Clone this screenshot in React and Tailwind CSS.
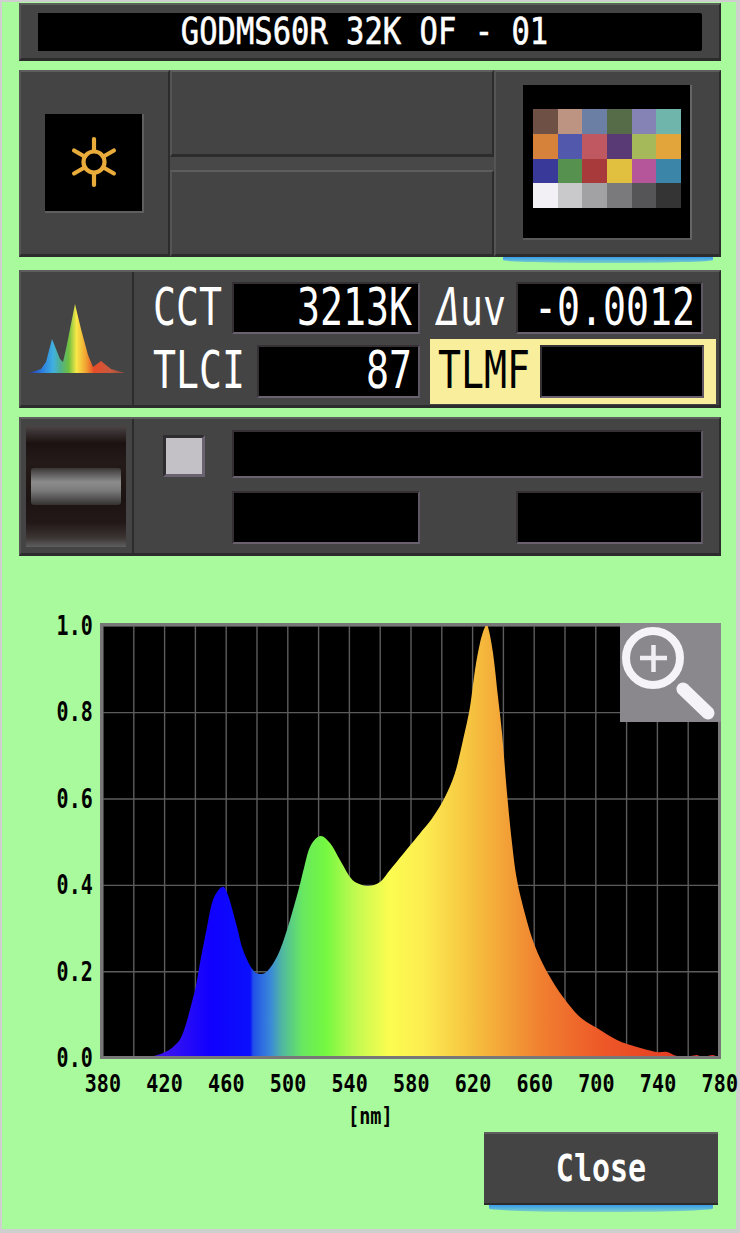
import React from "react";

const pts = [[140,1058],[150,1057],[163,1053],[173,1047],[183,1033],[195,990],[200,963],[207,927],[213,900],[222,887],[228,895],[237,927],[243,950],[253,970],[262,974],[270,968],[280,950],[290,920],[299,888],[304,868],[310,847],[320,836],[330,843],[340,860],[350,877],[357,883],[368,886],[380,882],[390,870],[417,837],[433,817],[445,797],[455,773],[463,740],[470,707],[475,670],[480,643],[485,627],[488,627],[493,653],[498,697],[502,733],[507,793],[512,843],[517,880],[525,914],[532,938],[540,958],[550,977],[563,997],[580,1017],[597,1028],[617,1040],[637,1047],[657,1052],[667,1052],[677,1056],[690,1056],[697,1055],[703,1057],[713,1055],[718,1058]];

function smooth(p) {
  let d = `M${p[0][0]} 1058 L${p[0][0]} ${p[0][1]}`;
  for (let i = 0; i < p.length - 1; i++) {
    const a = p[Math.max(i - 1, 0)], b = p[i], c = p[i + 1], e = p[Math.min(i + 2, p.length - 1)];
    d += ` C${b[0] + (c[0] - a[0]) / 6} ${b[1] + (c[1] - a[1]) / 6} ${c[0] - (e[0] - b[0]) / 6} ${c[1] - (e[1] - b[1]) / 6} ${c[0]} ${c[1]}`;
  }
  return d + ` L${p[p.length - 1][0]} 1058 Z`;
}

const chartColors = ["#6e5144","#bd9482","#6a7fa3","#566b48","#8582b5","#6fb5ab","#d6823a","#5258ab","#bf5860","#5a3a75","#a5b85a","#e2a53c","#39399a","#56914f","#a83a3c","#e2c03f","#b5569a","#3a85a8","#f2f0f4","#c9c9cb","#a2a2a4","#7a7a7c","#555557","#343434"];

const xLabels = ["380","420","460","500","540","580","620","660","700","740","780"];
const yLabels = ["1.0","0.8","0.6","0.4","0.2","0.0"];

const panel = "bg-[#444444] border-t-2 border-l-2 border-b-[3px] border-r-2 border-t-[#5e5e5e] border-l-[#555555] border-b-[#2c2c2c] border-r-[#2c2c2c]";
const well = "bg-black border-t-2 border-l-2 border-b-2 border-r-2 border-t-[#343034] border-l-[#343034] border-b-[#6b6270] border-r-[#5f5864] flex items-center justify-end";

function Big({ children, cls = "" }) {
  return <span className={"inline-block scale-y-[1.33] text-[38.2px] leading-none whitespace-pre " + cls}>{children}</span>;
}

function Sun() {
  const rays = [0, 60, 120, 180, 240, 300];
  return (
    <svg width="60" height="60" viewBox="-30 -30 60 60">
      <circle r="10.5" fill="none" stroke="#e9ac3b" strokeWidth="4.2" />
      {rays.map((a) => (
        <line key={a} x1="0" y1="-11" x2="0" y2="-23" stroke="#e9ac3b" strokeWidth="4.2" strokeLinecap="round" transform={`rotate(${a})`} />
      ))}
    </svg>
  );
}

function MiniSpectrum() {
  return (
    <svg width="100" height="74" viewBox="29 305 100 74">
      <defs>
        <linearGradient id="mini" gradientUnits="userSpaceOnUse" x1="30" y1="0" x2="127" y2="0">
          <stop offset="0" stopColor="#2a2f9a" />
          <stop offset="0.14" stopColor="#2a7ce0" />
          <stop offset="0.26" stopColor="#40b0e0" />
          <stop offset="0.34" stopColor="#50b088" />
          <stop offset="0.42" stopColor="#70c040" />
          <stop offset="0.5" stopColor="#f8e848" />
          <stop offset="0.6" stopColor="#f0a030" />
          <stop offset="0.68" stopColor="#e84c28" />
          <stop offset="0.85" stopColor="#c85a40" />
          <stop offset="1" stopColor="#8a4a3a" />
        </linearGradient>
      </defs>
      <path d="M31 376 L43 372 L48 365 L54 342 L62 362 L65 365 L68 352 L77 307 L83 332 L90 358 L95 370 L103 364 L113 372 L127 376 Z" fill="url(#mini)" />
    </svg>
  );
}

function Spectrum() {
  const vs = Array.from({ length: 21 }, (_, i) => 103 + i * 30.8);
  const hs = [626, 712.6, 799, 885.4, 971.8, 1058];
  return (
    <svg width="621" height="436" viewBox="100 623 621 436" className="block">
      <defs>
        <linearGradient id="spec" gradientUnits="userSpaceOnUse" x1="140" y1="0" x2="720" y2="0">
          <stop offset="0" stopColor="#4a14e0" />
          <stop offset="0.06" stopColor="#3210f4" />
          <stop offset="0.12" stopColor="#1000ff" />
          <stop offset="0.19" stopColor="#0a10fc" />
          <stop offset="0.195" stopColor="#2050e8" />
          <stop offset="0.225" stopColor="#3a88d8" />
          <stop offset="0.245" stopColor="#50b8a0" />
          <stop offset="0.28" stopColor="#68e860" />
          <stop offset="0.32" stopColor="#74f840" />
          <stop offset="0.37" stopColor="#c0fa50" />
          <stop offset="0.43" stopColor="#fcfc50" />
          <stop offset="0.49" stopColor="#fcec50" />
          <stop offset="0.59" stopColor="#f5b83c" />
          <stop offset="0.69" stopColor="#f08030" />
          <stop offset="0.79" stopColor="#ee5a28" />
          <stop offset="1" stopColor="#e02c20" />
        </linearGradient>
      </defs>
      <rect x="100" y="623" width="621" height="436" fill="#000" />
      {vs.map((x) => <line key={x} x1={x} y1="624" x2={x} y2="1058" stroke="#5c5c5c" strokeWidth="1.4" />)}
      {hs.map((y) => <line key={y} x1="101" y1={y} x2="720" y2={y} stroke="#5c5c5c" strokeWidth="1.4" />)}
      <path d={smooth(pts)} fill="url(#spec)" />
      <rect x="101.5" y="624.5" width="618" height="433" fill="none" stroke="#777777" strokeWidth="3" />
    </svg>
  );
}

export default function App() {
  return (
    <div className="w-[740px] h-[1233px] overflow-hidden bg-[#cfcfcf] pt-[2px] pl-[2px] font-['DejaVu_Sans_Mono',monospace]">
      <div className="w-[734px] h-[1227px] bg-[#a8fa9c] pl-[17px] pt-[1px]">
        {/* title */}
        <div className={panel + " w-[702px] h-[58px] pt-[8px] pl-[17px]"}>
          <div className="w-[664px] h-[38px] bg-black rounded-r-[2px] flex items-center justify-center pr-[11px] text-white">
            <span className="inline-block scale-y-[1.2] text-[30.5px] leading-none whitespace-pre [-webkit-text-stroke:0.5px]">GODMS60R 32K OF - 01</span>
          </div>
        </div>

        {/* row 2 */}
        <div className="relative w-[702px] h-[187px] mt-[9px] flex">
          <div className={panel + " w-[151px] h-full flex items-center justify-center"}>
            <div className="w-[99px] h-[99px] bg-black border-b-2 border-r-2 border-b-[#5f5f5f] border-r-[#5f5f5f] flex items-center justify-center">
              <Sun />
            </div>
          </div>
          <div className="w-[324px] h-full flex flex-col justify-between bg-[#484848]">
            <div className={panel + " h-[87px]"} />
            <div className={panel + " h-[87px]"} />
          </div>
          <div className={panel + " w-[227px] h-full pt-[13px] pl-[27px]"}>
            <div className="w-[169px] h-[155px] bg-black border-r-2 border-b-2 border-r-[#666666] border-b-[#5a5a5a] pt-[24px] pl-[10px]">
              <div className="w-[148px] h-[99px] grid grid-cols-6 grid-rows-4">
                {chartColors.map((c, i) => <div key={i} style={{ backgroundColor: c }} />)}
              </div>
            </div>
          </div>
          <div className="absolute left-[484px] top-[187px] w-[210px] h-[6px] rounded-b-[50%] bg-linear-to-b from-[#3a9ae8] to-[#7ad0c8]" />
        </div>

        {/* row 3 */}
        <div className={panel + " w-[702px] h-[138px] mt-[13px] flex"}>
          <div className="w-[113px] h-full shrink-0 border-r-2 border-r-[#2c2c2c] flex items-center justify-center">
            <MiniSpectrum />
          </div>
          <div className="flex flex-col text-white">
            <div className="flex items-center h-[52px] mt-[10px]">
              <div className="w-[79px] ml-[19px]"><Big>CCT</Big></div>
              <div className={well + " w-[188px] h-[52px] pr-[6px]"}><Big>3213K</Big></div>
              <div className="w-[96px] pl-[17px]"><Big><span className="italic font-light">Δ</span>uv</Big></div>
              <div className={well + " w-[187px] h-[52px] pr-[6px]"}><Big>-0.0012</Big></div>
            </div>
            <div className="flex items-center h-[65px] mt-[5px]">
              <div className="w-[104px] ml-[19px]"><Big>TLCI</Big></div>
              <div className={well + " w-[163px] h-[53px] pr-[6px]"}><Big>87</Big></div>
              <div className="w-[286px] h-[65px] ml-[10px] bg-[#f8ee9c] flex items-center pl-[8px] text-black">
                <div className="w-[102px]"><Big>TLMF</Big></div>
                <div className={well + " w-[164px] h-[53px] border-t-[#000000] border-l-[#000000]"} />
              </div>
            </div>
          </div>
        </div>

        {/* row 4 */}
        <div className={panel + " w-[702px] h-[139px] mt-[9px] flex"}>
          <div className="w-[113px] h-full shrink-0 border-r-2 border-r-[#2c2c2c] flex items-center pl-[5px]">
            <div className="w-[100px] h-[121px] flex items-center justify-center bg-[linear-gradient(to_bottom,#4a4444_0%,#1c1212_14%,#241a18_30%,#1c1412_62%,#221818_80%,#3a3432_92%,#5e5e5e_100%)]">
              <div className="w-[90px] h-[37px] rounded-[3px] bg-[linear-gradient(to_bottom,#3a3636_0%,#8c8c8c_38%,#7c7c7c_60%,#353131_100%)]" />
            </div>
          </div>
          <div className="relative flex flex-col">
            <div className="flex h-[48px] mt-[11px] ml-[98px]">
              <div className={well + " w-[471px] h-[48px]"} />
            </div>
            <div className="flex mt-[13px] ml-[98px]">
              <div className={well + " w-[188px] h-[53px]"} />
              <div className="w-[96px]" />
              <div className={well + " w-[187px] h-[53px]"} />
            </div>
            <div className="absolute left-[29px] top-[16px] w-[42px] h-[42px] bg-[#c4c1c6] border-[3px] border-t-[#2f2c30] border-l-[#2f2c30] border-b-[#6b6270] border-r-[#6b6270]" />
          </div>
        </div>

        {/* chart */}
        <div className="flex items-start mt-[60px] -ml-[19px] text-black font-bold">
          <div className="w-[93px] h-[452px] flex flex-col justify-between items-end text-[20px] leading-[20px] tracking-[0.1px]">
            {yLabels.map((l) => <span key={l} className="inline-block scale-y-[1.3]">{l}</span>)}
          </div>
          <div className="relative ml-[7px] mt-[7px]">
            <Spectrum />
            <div className="absolute right-0 top-0 w-[101px] h-[99px] bg-[#8a888c]">
              <svg width="101" height="99" viewBox="620 623 101 99">
                <circle cx="653" cy="658" r="27" fill="none" stroke="#f5f3f8" strokeWidth="8" />
                <path d="M640 658 H667 M653.5 645 V672" stroke="#f0eef3" strokeWidth="4.5" fill="none" />
                <path d="M683 689 L708 713" stroke="#f5f3f8" strokeWidth="13" strokeLinecap="round" />
              </svg>
            </div>
          </div>
        </div>
        <div className="flex justify-between w-[657px] ml-[64px] mt-[6px] text-black font-bold text-[20px] leading-[20px] tracking-[0.2px]">
          {xLabels.map((l) => (
            <span key={l} className="w-[40px] text-center scale-y-[1.2] block">{l}</span>
          ))}
        </div>
        <div className="flex relative h-[130px]">
          <div className="ml-[329px] mt-[11px] text-black font-bold text-[18.5px] leading-[22px]">
            <span className="inline-block scale-y-[1.25]">[nm]</span>
          </div>
          <div className="absolute left-[465px] top-[38px] w-[234px]">
            <button className="block w-[234px] h-[73px] bg-[#444444] border-t-2 border-t-[#5e5e5e] border-b-2 border-b-[#2c2c2c] text-white font-bold">
              <span className="inline-block scale-y-[1.25] text-[30px] leading-none">Close</span>
            </button>
            <div className="mx-auto w-[224px] h-[7px] rounded-b-[50%] bg-linear-to-b from-[#3a9ae8] to-[#7ad0c8]" />
          </div>
        </div>
      </div>
    </div>
  );
}
